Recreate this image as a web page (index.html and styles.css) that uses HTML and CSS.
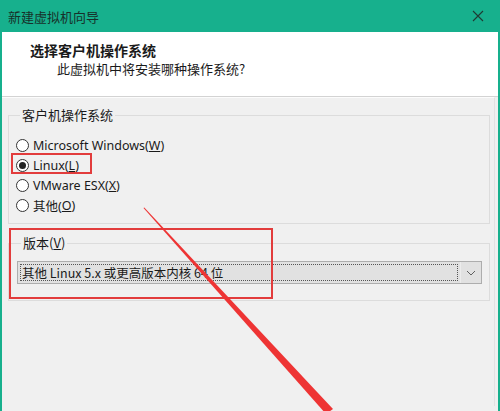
FILE: index.html
```html
<!DOCTYPE html>
<html lang="zh-CN">
<head>
  <meta charset="UTF-8">
  <title>新建虚拟机向导</title>
  <link rel="stylesheet" href="styles.css">
</head>
<body>

<div class="window">
  <div class="titlebar">
    <span class="title">新建虚拟机向导</span>
    <svg class="close" width="12" height="12" viewBox="0 0 12 12">
      <path d="M1 1L11 11M11 1L1 11" stroke="#1f3b33" stroke-width="1.1" fill="none"/>
    </svg>
  </div>

  <div class="header">
    <div class="heading">选择客户机操作系统</div>
    <div class="subheading">此虚拟机中将安装哪种操作系统?</div>
  </div>

  <div class="content">
    <fieldset class="group">
      <legend>客户机操作系统</legend>
      <label class="radio"><span class="dot"></span>Microsoft Windows(<u>W</u>)</label>
      <label class="radio"><span class="dot checked"></span>Linux(<u>L</u>)</label>
      <label class="radio"><span class="dot"></span>VMware ESX(<u>X</u>)</label>
      <label class="radio"><span class="dot"></span>其他(<u>O</u>)</label>
    </fieldset>

    <fieldset class="group">
      <legend>版本(<u>V</u>)</legend>
      <div class="select">
        <div class="select-value">其他 Linux 5.x 或更高版本内核 64 位</div>
        <div class="select-arrow">
          <svg width="10" height="6" viewBox="0 0 10 6">
            <path d="M1 1L5 5L9 1" stroke="#606060" stroke-width="1" fill="none"/>
          </svg>
        </div>
      </div>
    </fieldset>
  </div>

  <!-- red annotation marks drawn over the dialog -->
  <svg class="marks" width="500" height="411" viewBox="0 0 500 411">
    <rect x="12" y="154" width="79" height="19" fill="none" stroke="#e23c3c" stroke-width="2"/>
    <rect x="10" y="229" width="262" height="69" fill="none" stroke="#e23c3c" stroke-width="2"/>
    <polygon points="143.5,208 144.3,207.6 333,409 326,414" fill="#ee3434"/>
  </svg>
</div>

</body>
</html>
```

FILE: styles.css
```css
html, body {
  margin: 0;
  padding: 0;
}

body {
  width: 500px;
  height: 411px;
  overflow: hidden;
  font-family: "Noto Sans", "Noto Sans CJK SC", sans-serif;
  font-size: 13px;
  color: #1a1a1a;
}

.window {
  position: relative;
  height: 411px;
  border-left: 2px solid #17b08d;
  border-right: 2px solid #17b08d;
  background: #f0f0f0;
}

.titlebar {
  height: 32px;
  background: #17b08d;
  display: flex;
  align-items: center;
  justify-content: space-between;
  padding: 0 14px 0 6px;
}

.title {
  font-family: "Noto Sans CJK SC", sans-serif;
  font-size: 13px;
  color: #17302a;
}

.header {
  background: #fff;
  border-bottom: 1px solid #d3d3d3;
  padding: 9px 0 0 28px;
  box-sizing: border-box;
  height: 65px;
}

.heading {
  font-family: "Noto Sans CJK SC", sans-serif;
  font-weight: bold;
  font-size: 14px;
  line-height: 18px;
}

.subheading {
  font-family: "Noto Sans CJK SC", sans-serif;
  font-size: 13px;
  line-height: 18px;
  margin: 1px 0 0 27px;
}

.content {
  padding-top: 8px;
  border-top: 1px solid #fcfcfc;
  margin-right: 3px;
  border-right: 1px solid #e2e2e2;
  height: 300px;
}

.group {
  margin: 0 4px 10px 6px;
  padding: 11px 7px 8px 7px;
  border: 1px solid #dcdcdc;
  min-width: 0;
}

.group legend {
  padding: 0 2px;
  margin-left: 4px;
  line-height: 18px;
  font-family: "Noto Sans CJK SC", sans-serif;
}

.group + .group {
  padding: 9px 7px 16px 8px;
}

.radio {
  display: flex;
  align-items: center;
  height: 20px;
  font-size: 12.5px;
}

.dot {
  width: 11px;
  height: 11px;
  border: 1px solid #333;
  border-radius: 50%;
  background: #fff;
  margin-right: 4px;
  position: relative;
  flex: none;
}

.dot.checked::after {
  content: "";
  position: absolute;
  left: 2px;
  top: 2px;
  width: 7px;
  height: 7px;
  border-radius: 50%;
  background: #222;
}

.select {
  display: flex;
  height: 23px;
  border: 1px solid #adadad;
  background: #e1e1e1;
  box-sizing: border-box;
}

.select-value {
  flex: 1;
  margin: 2px;
  border: 1px dotted #555;
  padding-left: 1px;
  line-height: 15px;
  font-size: 12.5px;
  font-family: "Noto Sans CJK SC", sans-serif;
  white-space: nowrap;
}

.select-arrow {
  width: 20px;
  display: flex;
  align-items: center;
  justify-content: center;
  border-left: 1px solid #ececec;
}

.marks {
  position: absolute;
  left: -2px;
  top: 0;
  pointer-events: none;
}
```
